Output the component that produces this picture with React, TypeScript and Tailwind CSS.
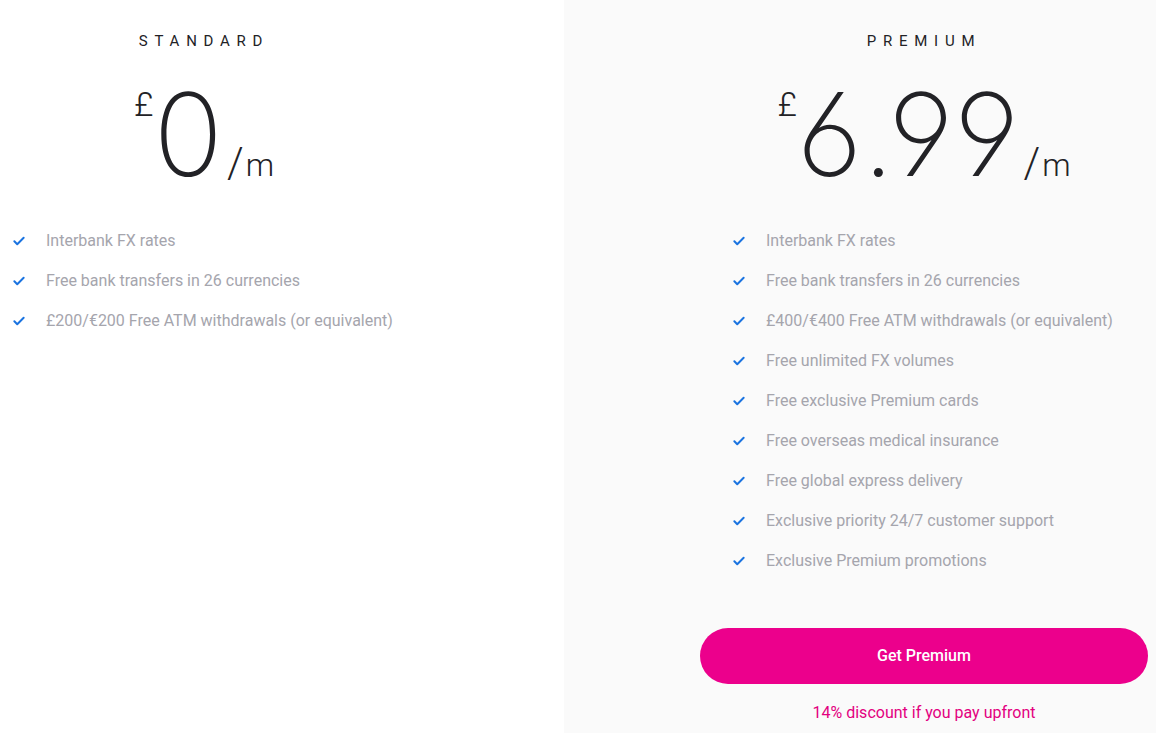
import React from 'react';

const CheckIcon: React.FC = () => (
  <svg className="h-[14px] w-[14px] shrink-0 text-[#1a73e0]" viewBox="0 0 24 24" fill="none" stroke="currentColor" strokeWidth={3.4} strokeLinecap="round" strokeLinejoin="round">
    <path d="M4 12.5l5 5L20 6.5" />
  </svg>
);

type Plan = {
  name: string;
  price: string;
  features: string[];
};

const PlanColumn: React.FC<{ plan: Plan; children?: React.ReactNode }> = ({ plan, children }) => (
  <div className="w-[448px] shrink-0 pt-[31px]">
    <h2 className="text-center text-[15px] leading-[20px] tracking-[0.45em] text-[#222226] font-['Roboto',sans-serif]">
      {plan.name}
    </h2>
    <div className="mt-[38px] flex justify-center items-end h-[110px]">
      <span className="self-start text-[34px] leading-none mt-[-2px] text-[#222226] font-['Roboto',sans-serif] font-light">£</span>
      <span className="mb-[14px] text-[115px] leading-[100px] text-[#222226] font-['Inter',sans-serif] font-extralight [font-feature-settings:'ss01','cv03','cv04']">
        {plan.price}
      </span>
      <span className="mb-[15px] ml-[4px] flex items-end text-[#222226] font-['Roboto',sans-serif] font-light">
        <span className="text-[42px] leading-none">/</span>
        <span className="text-[32px] leading-none ml-[2px] mb-[3px]">m</span>
      </span>
    </div>
    <ul className="mt-[22px] pl-[32px] font-['Roboto',sans-serif]">
      {plan.features.map((f) => (
        <li key={f} className="flex items-center h-10 gap-[20px] text-[16px] text-[#a5a5ad]">
          <CheckIcon />
          <span>{f}</span>
        </li>
      ))}
    </ul>
    {children}
  </div>
);

const standard: Plan = {
  name: 'STANDARD',
  price: '0',
  features: [
    'Interbank FX rates',
    'Free bank transfers in 26 currencies',
    '£200/€200 Free ATM withdrawals (or equivalent)',
  ],
};

const premium: Plan = {
  name: 'PREMIUM',
  price: '6.99',
  features: [
    'Interbank FX rates',
    'Free bank transfers in 26 currencies',
    '£400/€400 Free ATM withdrawals (or equivalent)',
    'Free unlimited FX volumes',
    'Free exclusive Premium cards',
    'Free overseas medical insurance',
    'Free global express delivery',
    'Exclusive priority 24/7 customer support',
    'Exclusive Premium promotions',
  ],
};

const App: React.FC = () => {
  return (
    <div className="flex h-[733px] w-[1156px] overflow-hidden">
      {/* Standard */}
      <section className="w-[564px] shrink-0 bg-white overflow-hidden">
        <div className="ml-[-20px]">
          <PlanColumn plan={standard} />
        </div>
      </section>

      {/* Premium */}
      <section className="flex-1 bg-[#fafafa] pl-[136px]">
        <PlanColumn plan={premium}>
          <button className="mt-[47px] w-full h-14 rounded-full bg-[#ec008c] text-white text-[16px] font-medium font-['Roboto',sans-serif]">
            Get Premium
          </button>
          <p className="mt-[17px] text-center text-[16px] text-[#e3007f] font-['Roboto',sans-serif]">
            14% discount if you pay upfront
          </p>
        </PlanColumn>
      </section>
    </div>
  );
};

export default App;
